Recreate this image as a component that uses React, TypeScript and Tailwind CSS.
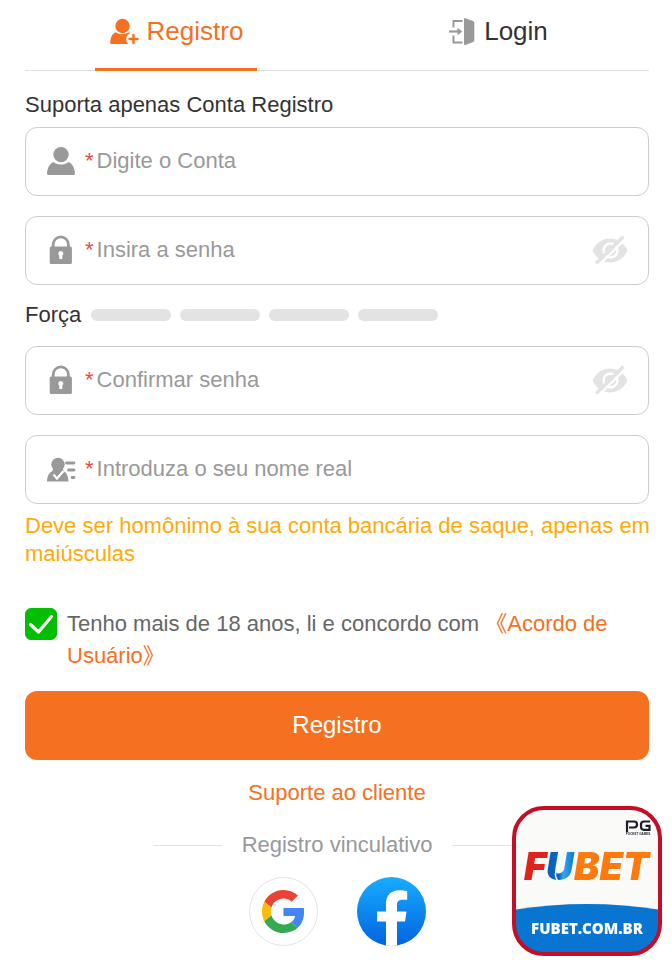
import type { ReactNode } from "react";

const UserIcon = () => (
  <svg className="h-[30px] w-[30px] shrink-0 fill-[#999]" viewBox="0 0 30 30">
    <circle cx="15" cy="8.6" r="7.7" />
    <path d="M7.500 16C10 17.800 12.500 18.600 15 18.600S20 17.800 22.500 16C26.500 17.800 28.700 22 29 27.500Q29 29 27.500 29H2.500Q1 29 1 27.500C1.300 22 3.500 17.800 7.500 16Z" />
  </svg>
);

const LockIcon = () => (
  <svg className="h-[30px] w-[30px] shrink-0" viewBox="0 0 30 30">
    <path
      d="M7.200 13V9.500a7.600 7.600 0 0 1 15.200 0V13"
      fill="none"
      stroke="#999"
      strokeWidth="2.800"
    />
    <path
      fillRule="evenodd"
      fill="#999"
      d="M5.300 11.500h19a1.600 1.600 0 0 1 1.600 1.600v14.300a1.600 1.600 0 0 1-1.600 1.600h-19a1.600 1.600 0 0 1-1.600-1.600V13.100a1.600 1.600 0 0 1 1.600-1.600ZM14.800 16a2.500 2.500 0 0 0-1.500 4.500V24h3v-3.500A2.500 2.500 0 0 0 14.800 16Z"
    />
  </svg>
);

const NameIcon = () => (
  <svg className="h-[30px] w-[30px] shrink-0" viewBox="0 0 30 30">
    <circle cx="12" cy="10.500" r="6.700" fill="#999" />
    <path
      fill="#999"
      d="M7.500 14.500h9l1.500 3c2.500 1.300 4.300 4.500 4.500 10H1c.2-5.500 2-8.700 5-10Z"
    />
    <path d="m7.500 20.500 3.500 4 6.500-7.500" fill="none" stroke="#fff" strokeWidth="2.200" />
    <path
      d="M20.500 9h7.500M22.500 16H28M26 23.500h2"
      stroke="#999"
      strokeWidth="2.800"
      strokeLinecap="round"
    />
  </svg>
);

const EyeIcon = () => (
  <svg className="h-[30px] w-9" viewBox="0 0 36 30">
    <path
      fill="#e3e3e3"
      d="M.5 15.500C4 7.500 11 3.500 18 3.500S32 7.500 35.500 15.500C32 23.500 25 27.500 18 27.500S4 23.500.5 15.500Z"
    />
    <circle cx="18.500" cy="15.500" r="7" fill="#e3e3e3" stroke="#fff" strokeWidth="2.400" />
    <path d="M19 18.500q3-.5 3.500-3.500l-2 .5Z" fill="#fff" />
    <path d="M6.500 30.500 34 3.500" stroke="#fff" strokeWidth="2" />
    <path d="M4 28.500 31.500 1.500" stroke="#e3e3e3" strokeWidth="3.400" />
  </svg>
);

const RegisterIcon = () => (
  <svg className="h-[30px] w-[30px] shrink-0 fill-[#f57020]" viewBox="0 0 30 30">
    <circle cx="13.500" cy="10" r="7.200" />
    <path d="M6.500 16.300c4 2.500 9.500 2.500 13.500 0l1.200.8c-2.700 1.700-4 3.400-4 5.900 0 2 .5 3.500 1.800 5H2.600Q1.200 28 1.200 26.500c.3-5 2-8.700 5.300-10.200Z" />
    <path
      d="M24.500 19v8M20.500 23h8"
      stroke="#f57020"
      strokeWidth="2.400"
      strokeLinecap="round"
    />
  </svg>
);

const LoginIcon = () => (
  <svg className="h-[30px] w-[28px] shrink-0" viewBox="0 0 28 30">
    <path
      d="M14.500 5H5.500V11.500M5.500 19.500V26.500H14.500"
      fill="none"
      stroke="#999"
      strokeWidth="2"
    />
    <path d="M1 15.500h10" stroke="#999" strokeWidth="2.200" />
    <path d="m9.500 11.800 4.800 3.700-4.800 3.700Z" fill="#999" />
    <path
      d="M17.500 2.200 25 5q1.300.7 1.300 2v17q0 1.300-1.300 2l-7.500 3q-1.500.5-1.500-1V3.200q0-1.500 1.500-1Z"
      fill="#999"
    />
  </svg>
);

const GoogleIcon = () => (
  <svg className="h-[43px] w-[43px]" viewBox="0 0 48 48">
    <path
      fill="#EA4335"
      d="M24 9.500c3.540 0 6.710 1.220 9.210 3.600l6.850-6.850C35.900 2.380 30.470 0 24 0 14.620 0 6.510 5.380 2.560 13.220l7.980 6.190C12.430 13.720 17.740 9.500 24 9.500z"
    />
    <path
      fill="#4285F4"
      d="M46.980 24.550c0-1.570-.15-3.090-.38-4.550H24v9.020h12.940c-.58 2.960-2.260 5.480-4.780 7.180l7.730 6c4.510-4.180 7.090-10.360 7.090-17.650z"
    />
    <path
      fill="#FBBC05"
      d="M10.530 28.590c-.48-1.450-.76-2.990-.76-4.590s.27-3.140.76-4.590l-7.980-6.190C.92 16.460 0 20.120 0 24c0 3.880.92 7.540 2.560 10.780l7.970-6.190z"
    />
    <path
      fill="#34A853"
      d="M24 48c6.480 0 11.930-2.130 15.890-5.810l-7.730-6c-2.150 1.450-4.920 2.300-8.160 2.300-6.260 0-11.570-4.220-13.470-9.910l-7.980 6.190C6.510 42.620 14.620 48 24 48z"
    />
  </svg>
);

const FacebookIcon = () => (
  <svg className="h-[69px] w-[69px]" viewBox="0 0 69 69">
    <defs>
      <linearGradient id="fb" x1="0" y1="0" x2="0" y2="1">
        <stop offset="0" stopColor="#18acfe" />
        <stop offset="1" stopColor="#0163e0" />
      </linearGradient>
    </defs>
    <circle cx="34.500" cy="34.500" r="34.500" fill="url(#fb)" />
    <path
      fill="#fff"
      d="M48 44.500l1.500-10H40V28c0-3 1.500-5.200 5.500-5.200h4.700V14c-2.500-.5-5-.8-7.700-.8C34 13.200 29 18.200 29 26.500v8h-9v10h9v24a35 35 0 0 0 11 0v-24Z"
    />
  </svg>
);

const FubetLogo = () => (
  <svg className="h-[150px] w-[150px]" viewBox="0 0 150 150">
    <defs>
      <clipPath id="badge">
        <rect x="2" y="2" width="146" height="146" rx="30" />
      </clipPath>
      <linearGradient id="u" x1="0" y1="0" x2="1" y2="0">
        <stop offset="0" stopColor="#0a5fb8" />
        <stop offset=".45" stopColor="#0868c4" />
        <stop offset=".6" stopColor="#35a5ee" />
        <stop offset="1" stopColor="#0875d1" />
      </linearGradient>
    </defs>
    <g clipPath="url(#badge)">
      <rect width="150" height="150" fill="#fafaf8" />
      <path d="M0 104Q75 92 150 104V150H0Z" fill="#0875d1" />
    </g>
    <rect
      x="2"
      y="2"
      width="146"
      height="146"
      rx="30"
      fill="none"
      stroke="#c40d26"
      strokeWidth="4"
    />
    <g fontFamily="Inter, sans-serif" fontWeight="900" fontStyle="italic" fontSize="38">
      <text x="12" y="74" fill="#e1221c">
        F
      </text>
      <text x="34" y="74" fill="url(#u)">
        U
      </text>
      <text x="62" y="74" fill="#ff7a0c">
        BET
      </text>
    </g>
    <path d="M44 65q-2 6 3 11" fill="none" stroke="#fafaf8" strokeWidth="1.500" />
    <g fill="none" stroke="#1d1d29" strokeWidth="2.200">
      <path d="M115 26V15.500h7q3 0 3 3t-3 3H117" />
      <path d="M138 15.500h-6q-3 0-3 3v2.300q0 3 3 3h5.500v-4h-4" />
    </g>
    <text
      x="126"
      y="29"
      fill="#1d1d29"
      textAnchor="middle"
      fontFamily="Liberation Sans, sans-serif"
      fontWeight="700"
      fontSize="3"
    >
      POCKET GAMES
    </text>
    <text
      x="75"
      y="128"
      fill="#fff"
      textAnchor="middle"
      fontFamily="Open Sans, sans-serif"
      fontWeight="800"
      fontSize="15"
    >
      FUBET.COM.BR
    </text>
  </svg>
);

type FieldProps = {
  id: string;
  label: string;
  type?: string;
  icon: ReactNode;
  toggle?: boolean;
};

const Field = ({ id, label, type = "text", icon, toggle }: FieldProps) => {
  return (
    <div className="flex h-[69px] items-center rounded-xl border border-[#ccc] px-5 pb-px">
      {icon}
      <label htmlFor={id} aria-label={label} className="ml-[9px] text-[#e84c3d]">
        *
      </label>
      <input
        id={id}
        type={type}
        placeholder={label}
        required
        className="ml-[3px] h-full min-w-0 flex-1 bg-transparent outline-none placeholder:text-[#999]"
      />
      {toggle && (
        <button type="button" aria-label="Mostrar senha" className="cursor-pointer">
          <EyeIcon />
        </button>
      )}
    </div>
  );
};

const App = () => {
  return (
    <div className="min-h-screen bg-white pr-[23px] pb-5 pl-[25px] font-['Liberation_Sans','Noto_Sans_CJK_SC',sans-serif] text-[22px] leading-7 text-[#333]">
      <div className="border-b border-[#e0e0e0]">
        <nav className="-mx-[10px] grid grid-cols-2 justify-items-center text-[26px]">
          <button
            type="button"
            className="-mb-px flex h-[71px] items-center gap-2 border-b-3 border-[#f57020] px-[14px] pb-[6px] text-[#f57020]"
          >
            <RegisterIcon />
            Registro
          </button>
          <button type="button" className="flex h-[70px] items-center gap-2 px-[14px] pb-2">
            <LoginIcon />
            Login
          </button>
        </nav>
      </div>

      <form>
        <p className="mt-5 mb-2">Suporta apenas Conta Registro</p>
        <div className="flex flex-col gap-5">
          <Field id="account" label="Digite o Conta" icon={<UserIcon />} />
          <Field
            id="password"
            label="Insira a senha"
            type="password"
            icon={<LockIcon />}
            toggle
          />
        </div>

        <div className="flex h-[61px] items-center pb-[2px]">
          <span className="mr-[10px]">Força</span>
          <div className="flex gap-[9px]">
            <div className="h-3 w-20 rounded-full bg-[#e3e3e3]"></div>
            <div className="h-3 w-20 rounded-full bg-[#e3e3e3]"></div>
            <div className="h-3 w-20 rounded-full bg-[#e3e3e3]"></div>
            <div className="h-3 w-20 rounded-full bg-[#e3e3e3]"></div>
          </div>
        </div>

        <div className="flex flex-col gap-5">
          <Field
            id="confirm"
            label="Confirmar senha"
            type="password"
            icon={<LockIcon />}
            toggle
          />
          <Field id="name" label="Introduza o seu nome real" icon={<NameIcon />} />
        </div>
        <p className="mt-2 -mr-4 text-[#ffaa09]">
          Deve ser homônimo à sua conta bancária de saque, apenas em maiúsculas
        </p>

        <div className="mt-10 flex items-start gap-[10px]">
          <div className="relative h-8 w-8 shrink-0">
            <input
              id="terms"
              type="checkbox"
              defaultChecked
              className="peer block h-8 w-8 appearance-none rounded-md border border-[#ccc] checked:border-[#04be02] checked:bg-[#04be02]"
            />
            <svg
              className="pointer-events-none absolute inset-0 hidden h-8 w-8 peer-checked:block"
              viewBox="0 0 32 32"
            >
              <path
                d="m5.500 16.500 8 7.500L26.500 8.500"
                fill="none"
                stroke="#fff"
                strokeWidth="3.200"
                strokeLinecap="round"
                strokeLinejoin="round"
              />
            </svg>
          </div>
          <p className="leading-8 text-[#666]">
            <label htmlFor="terms">Tenho mais de 18 anos, li e concordo com</label>{" "}
            <a href="#terms" className="text-[#f57020]">
              《Acordo de Usuário》
            </a>
          </p>
        </div>

        <button
          type="submit"
          className="mt-[19px] h-[69px] w-full cursor-pointer rounded-xl bg-[#f57020] pb-[2px] text-2xl text-white"
        >
          Registro
        </button>
      </form>

      <div className="mt-[19px] text-center">
        <a href="#support" className="text-[#f57020]">
          Suporte ao cliente
        </a>
      </div>

      <div className="mt-6 flex items-center justify-center gap-5 text-[#999]">
        <div className="h-px w-[69px] bg-[#e3e3e3]"></div>
        <span>Registro vinculativo</span>
        <div className="h-px w-[69px] bg-[#e3e3e3]"></div>
      </div>
      <div className="mt-[18px] flex justify-center gap-[39px]">
        <button
          type="button"
          aria-label="Google"
          className="flex h-[69px] w-[69px] items-center justify-center rounded-full border border-[#dfe3ec] bg-white"
        >
          <GoogleIcon />
        </button>
        <button type="button" aria-label="Facebook" className="rounded-full">
          <FacebookIcon />
        </button>
      </div>

      <a href="#fubet" aria-label="FUBET" className="fixed right-[10px] bottom-[10px]">
        <FubetLogo />
      </a>
    </div>
  );
};

export default App;
